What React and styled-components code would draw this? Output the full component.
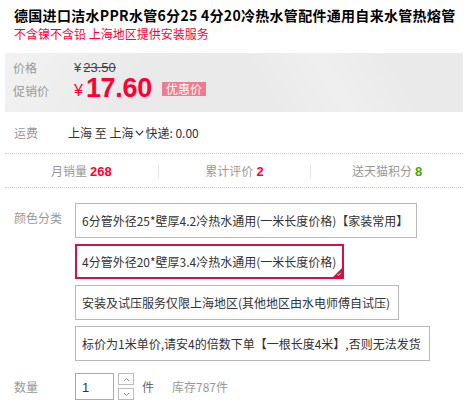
import React from 'react';
import styled, { createGlobalStyle } from 'styled-components';

const GlobalStyle = createGlobalStyle`
  * { margin: 0; padding: 0; box-sizing: border-box; }
  body {
    background: #fff;
    font-family: "Noto Sans CJK SC", "Microsoft YaHei", sans-serif;
    color: #333;
    font-size: 12px;
  }
`;

const Wrapper = styled.div`
  width: 474px;
  height: 408px;
  padding: 0 11px 0 5px;
  overflow: hidden;
`;

const Title = styled.h1`
  padding: 5px 0 0 9px;
  font-size: 14px;
  line-height: 20px;
  font-weight: 700;
  color: #000;
  white-space: nowrap;
  letter-spacing: 0.3px;
`;

const SubTitle = styled.p`
  padding-left: 9px;
  font-size: 12px;
  line-height: 18px;
  color: #ff0036;
  margin-bottom: 10px;
`;

const PriceBox = styled.div`
  height: 59px;
  padding: 4px 8px 9px;
  background:
    linear-gradient(120deg, rgba(255,255,255,0.4) 0%, rgba(255,255,255,0) 30%),
    linear-gradient(60deg, rgba(255,255,255,0) 55%, rgba(255,255,255,0.25) 70%, rgba(255,255,255,0) 85%),
    #eaeaea;
`;

const PriceRow = styled.div`
  display: flex;
  align-items: flex-start;
  height: ${p => p.$h}px;
`;

const Label = styled.span`
  flex: none;
  width: ${p => p.$w || 61}px;
  line-height: ${p => p.$lh || 24}px;
  color: #999;
  font-size: 12px;
`;

const OldPrice = styled.span`
  line-height: 22px;
  font-family: "Liberation Sans", Arial, sans-serif;
  font-size: 13px;
  color: #444;
  span { text-decoration: line-through; margin-left: 2px; }
`;

const Yen = styled.span`
  line-height: 24px;
  font-size: 16px;
  color: #ff0036;
  font-family: "Liberation Sans", Arial, sans-serif;
`;

const BigPrice = styled.span`
  margin-left: 3px;
  font-family: "Liberation Sans", Arial, sans-serif;
  font-size: 27px;
  line-height: 18px;
  font-weight: 700;
  color: #ff0036;
  letter-spacing: -0.3px;
`;

const Badge = styled.span`
  margin: 3px 0 0 10px;
  height: 14px;
  padding: 0 4px;
  line-height: 14px;
  font-size: 12px;
  color: #fff;
  background: #f07a8e;
`;

const Row = styled.div`
  display: flex;
  align-items: center;
  padding-left: 9px;
  margin-top: 11px;
  height: 20px;
`;

const Value = styled.span`
  display: flex;
  align-items: center;
  color: #333;
  font-size: 12px;
  line-height: 20px;
  white-space: nowrap;
  svg { margin: 0 1px 0 2px; }
`;

const Stats = styled.div`
  display: grid;
  grid-template-columns: repeat(3, 1fr);
  align-items: center;
  margin-top: 10px;
  height: 35px;
  border-top: 1px dotted #c8c8c8;
  border-bottom: 1px dotted #c8c8c8;
`;

const Stat = styled.div`
  height: 14px;
  line-height: 14px;
  text-align: center;
  color: #999;
  font-size: 12px;
  border-left: ${p => (p.$first ? 'none' : '1px solid #e5e5e5')};
  b {
    margin-left: 3px;
    font-family: "Liberation Sans", Arial, sans-serif;
    font-size: 13px;
    color: ${p => p.$color || '#ff0036'};
  }
`;

const Sku = styled.div`
  display: flex;
  align-items: flex-start;
  padding-left: 9px;
  margin-top: 15px;
`;

const SkuList = styled.div`
  display: flex;
  flex-direction: column;
  align-items: flex-start;
  gap: 6px;
`;

const SkuItem = styled.div`
  position: relative;
  height: 35px;
  line-height: ${p => (p.$active ? 31 : 33)}px;
  padding: ${p => (p.$active ? '0 6px 0 5px' : '0 8px 0 6px')};
  border: ${p => (p.$active ? '2px solid #d01249' : '1px solid #b8b8b8')};
  font-size: 12px;
  color: #333;
  white-space: nowrap;
  &::after {
    content: '';
    display: ${p => (p.$active ? 'block' : 'none')};
    position: absolute;
    right: 0;
    bottom: 0;
    width: 0;
    height: 0;
    border-style: solid;
    border-width: 0 0 9px 9px;
    border-color: transparent transparent #d01249 transparent;
  }
`;

const Check = styled.svg`
  position: absolute;
  right: 0;
  bottom: 0;
  z-index: 1;
`;

const Qty = styled.div`
  display: flex;
  align-items: center;
  padding-left: 9px;
  margin-top: 12px;
`;

const Input = styled.div`
  width: 39px;
  height: 27px;
  border: 1px solid #aaa;
  padding-left: 6px;
  line-height: 27px;
  font-family: "Liberation Sans", Arial, sans-serif;
  font-size: 13px;
  color: #333;
`;

const Spin = styled.div`
  display: flex;
  flex-direction: column;
  gap: 3px;
  margin-left: 4px;
`;

const SpinBtn = styled.div`
  width: 16px;
  height: 12px;
  border: 1px solid #bbb;
  display: flex;
  align-items: center;
  justify-content: center;
`;

const Unit = styled.span`
  margin-left: ${p => p.$ml}px;
  color: ${p => p.$c};
  font-size: 12px;
  line-height: 20px;
`;

const Chevron = ({ up }) => (
  <svg width="7" height="5" viewBox="0 0 7 5">
    <path d={up ? 'M1 4L3.5 1.5L6 4' : 'M1 1L3.5 3.5L6 1'} fill="none" stroke="#888" strokeWidth="1" />
  </svg>
);

const skus = [
  '6分管外径25*壁厚4.2冷热水通用(一米长度价格)【家装常用】',
  '4分管外径20*壁厚3.4冷热水通用(一米长度价格)',
  '安装及试压服务仅限上海地区(其他地区由水电师傅自试压)',
  '标价为1米单价,请安4的倍数下单【一根长度4米】,否则无法发货',
];

export default function App() {
  return (
    <>
      <GlobalStyle />
      <Wrapper>
        <Title>德国进口洁水PPR水管6分25 4分20冷热水管配件通用自来水管热熔管</Title>
        <SubTitle>不含镍不含铅 上海地区提供安装服务</SubTitle>
        <PriceBox>
          <PriceRow $h={22}>
            <Label $lh={22}>价格</Label>
            <OldPrice>¥<span>23.50</span></OldPrice>
          </PriceRow>
          <PriceRow $h={24}>
            <Label>促销价</Label>
            <Yen>¥</Yen>
            <BigPrice>17.60</BigPrice>
            <Badge>优惠价</Badge>
          </PriceRow>
        </PriceBox>
        <Row>
          <Label $w={54} $lh={20}>运费</Label>
          <Value>
            上海 至 上海
            <svg width="9" height="6" viewBox="0 0 9 6">
              <path d="M0.8 0.8L4.5 4.8L8.2 0.8" fill="none" stroke="#333" strokeWidth="1.2" />
            </svg>
            快递: 0.00
          </Value>
        </Row>
        <Stats>
          <Stat $first>月销量<b>268</b></Stat>
          <Stat>累计评价<b>2</b></Stat>
          <Stat $color="#4ba500">送天猫积分<b>8</b></Stat>
        </Stats>
        <Sku>
          <Label $lh={30}>颜色分类</Label>
          <SkuList>
            {skus.map((s, i) => (
              <SkuItem key={s} $active={i === 1}>
                {s}
                {i === 1 && (
                  <Check width="9" height="9" viewBox="0 0 9 9">
                    <path d="M4.3 6.2L5.5 7.4L7.8 4.8" fill="none" stroke="#fff" strokeWidth="0.9" />
                  </Check>
                )}
              </SkuItem>
            ))}
          </SkuList>
        </Sku>
        <Qty>
          <Label $lh={20}>数量</Label>
          <Input>1</Input>
          <Spin>
            <SpinBtn><Chevron up /></SpinBtn>
            <SpinBtn><Chevron /></SpinBtn>
          </Spin>
          <Unit $ml={8} $c="#666">件</Unit>
          <Unit $ml={18} $c="#999">库存787件</Unit>
        </Qty>
      </Wrapper>
    </>
  );
}
